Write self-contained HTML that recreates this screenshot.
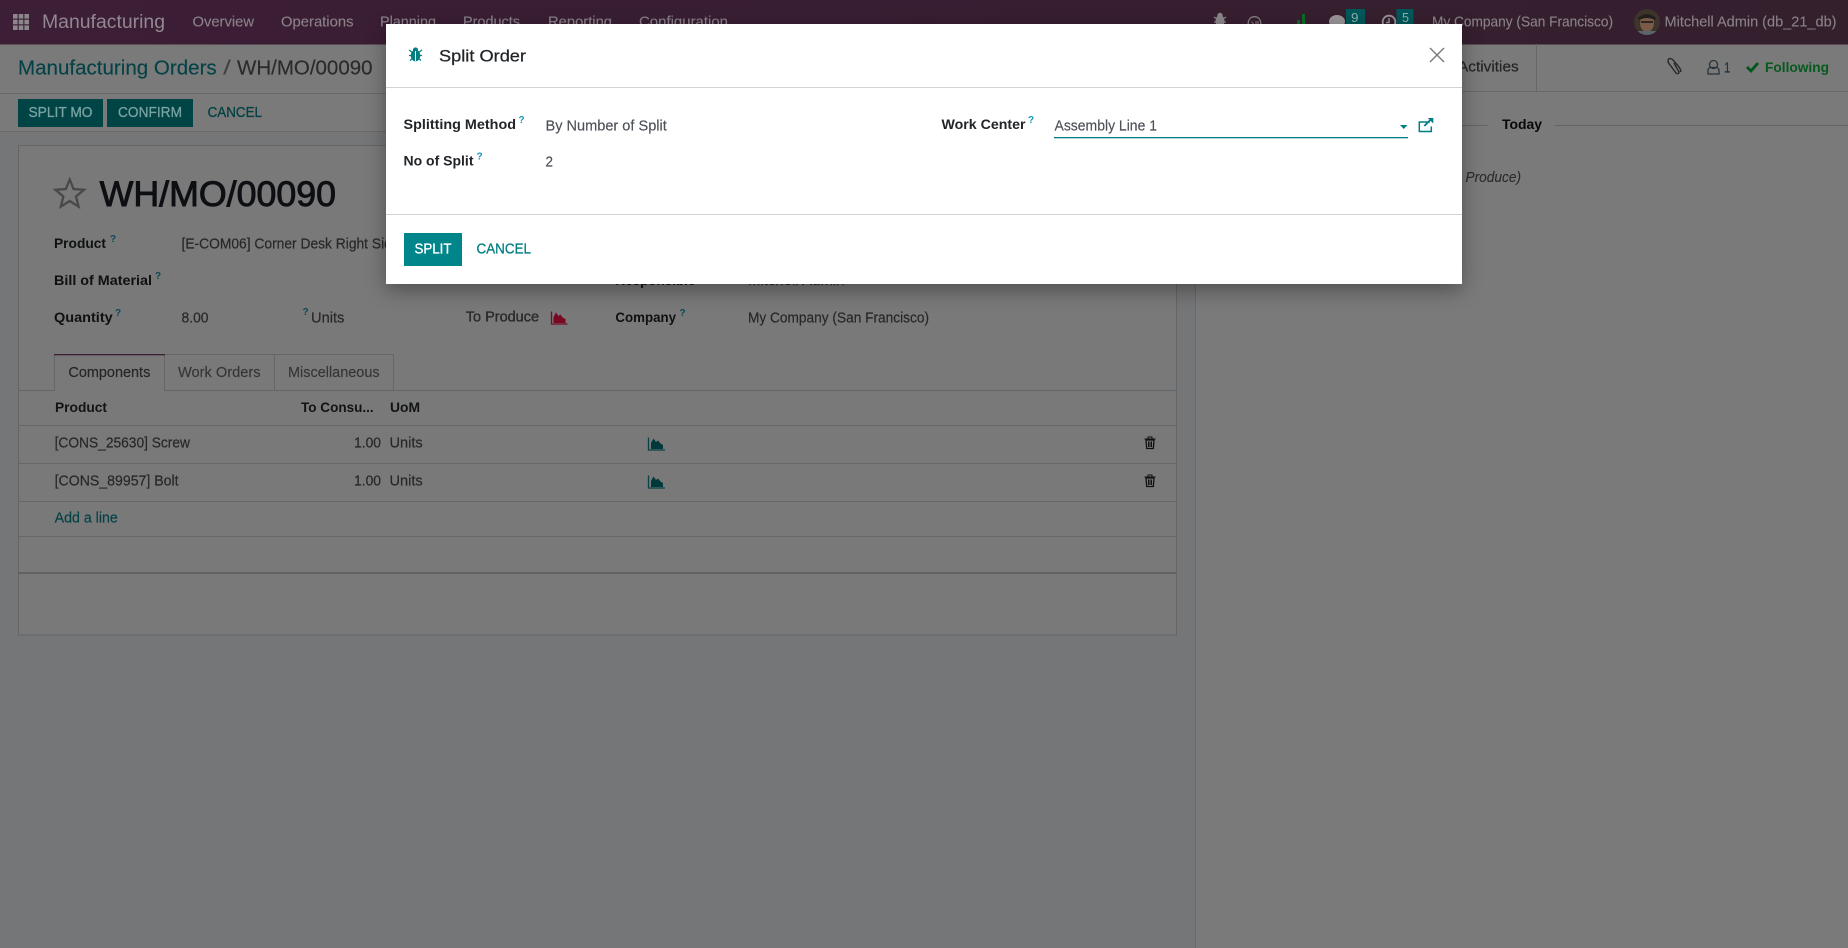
<!DOCTYPE html>
<html lang="en">
<head>
<meta charset="utf-8">
<title>Split Order</title>
<style>
html,body{margin:0;padding:0;width:1848px;height:948px;overflow:hidden;background:#7a7a7a}
svg{display:block;position:absolute;left:0;top:0}
text{font-family:"Liberation Sans",sans-serif;font-size:14.5px;white-space:pre}
.nav{fill:#8a8288;font-size:14.5px;stroke:#8a8288;stroke-width:.12}
.lb{font-weight:700;fill:#0e1012;font-size:14px}
.val{fill:#272727;stroke:#272727;stroke-width:.18}
.th{font-weight:700;fill:#111416;font-size:14px}
.q{font-size:10px;font-weight:700;fill:#0a4854}
.mq{font-size:10px;font-weight:700;fill:#1298b8}
.mlb{font-weight:700;fill:#212529;font-size:14px}
.mval{fill:#4c5058;stroke:#4c5058;stroke-width:.15}
.btn{font-size:14.5px;fill:#7aa2a2;stroke:#7aa2a2;stroke-width:.3}
</style>
</head>
<body>
<svg width="1848" height="948" viewBox="0 0 1848 948" xmlns="http://www.w3.org/2000/svg">
<defs>
<linearGradient id="top" x1="0" x2="1" y1="0" y2="0"><stop offset="0" stop-color="#3c1e36"/><stop offset="1" stop-color="#341f2d"/></linearGradient>
<clipPath id="av"><circle cx="1647" cy="22" r="13"/></clipPath>
</defs>

<!-- backdrop page -->
<rect width="1848" height="948" fill="#7a7a7a"/>
<rect x="0" y="131" width="1195" height="817" fill="#757677"/>

<!-- top navigation -->
<rect width="1848" height="44.500" fill="url(#top)"/>
<g fill="#8b878b">
<rect x="13" y="14" width="4.600" height="4.600"/><rect x="18.700" y="14" width="4.600" height="4.600"/><rect x="24.400" y="14" width="4.600" height="4.600"/>
<rect x="13" y="19.700" width="4.600" height="4.600"/><rect x="18.700" y="19.700" width="4.600" height="4.600"/><rect x="24.400" y="19.700" width="4.600" height="4.600"/>
<rect x="13" y="25.400" width="4.600" height="4.600"/><rect x="18.700" y="25.400" width="4.600" height="4.600"/><rect x="24.400" y="25.400" width="4.600" height="4.600"/>
</g>
<text x="42" y="28" textLength="123" lengthAdjust="spacingAndGlyphs" style="font-size:19px;fill:#928891">Manufacturing</text>
<text class="nav" x="192.500" y="26.500" textLength="61.500" lengthAdjust="spacingAndGlyphs">Overview</text>
<text class="nav" x="281" y="26.500" textLength="72.500" lengthAdjust="spacingAndGlyphs">Operations</text>
<text class="nav" x="380" y="26.500" textLength="56" lengthAdjust="spacingAndGlyphs">Planning</text>
<text class="nav" x="463" y="26.500" textLength="57" lengthAdjust="spacingAndGlyphs">Products</text>
<text class="nav" x="548" y="26.500" textLength="64" lengthAdjust="spacingAndGlyphs">Reporting</text>
<text class="nav" x="639" y="26.500" textLength="89" lengthAdjust="spacingAndGlyphs">Configuration</text>

<!-- systray -->
<g fill="#8b868a"><ellipse cx="1220" cy="21" rx="4.500" ry="6"/><circle cx="1220" cy="15.500" r="2.700"/><path d="M1214 17l3 2M1226 17l-3 2M1214 22h3M1226 22h-3" stroke="#8b868a" stroke-width="1.200"/></g>
<circle cx="1254.500" cy="23" r="6.300" fill="none" stroke="#868084" stroke-width="1.300"/>
<path d="M1251.500 21.500l2 2.500M1256 21v3M1258 21v3" stroke="#868084" stroke-width="1" fill="none"/>
<rect x="1297" y="20" width="3" height="6" fill="#0a6c28"/><rect x="1302" y="14" width="3" height="12" fill="#0a6c28"/>
<ellipse cx="1337" cy="21.500" rx="8" ry="6.500" fill="#9a9498"/>
<rect x="1346" y="9" width="19" height="17" fill="#00585a"/>
<text x="1351" y="22" textLength="7.500" lengthAdjust="spacingAndGlyphs" style="font-size:13px;fill:#8fb0ae">9</text>
<circle cx="1389" cy="22" r="6.300" fill="none" stroke="#9a9498" stroke-width="1.800"/><path d="M1389 18v4.500h-3" fill="none" stroke="#9a9498" stroke-width="1.400"/>
<rect x="1396.500" y="9" width="17" height="17" fill="#00585a"/>
<text x="1402" y="22" textLength="7" lengthAdjust="spacingAndGlyphs" style="font-size:13px;fill:#8fb0ae">5</text>
<text class="nav" x="1432" y="26.500" textLength="181" lengthAdjust="spacingAndGlyphs">My Company (San Francisco)</text>
<g clip-path="url(#av)">
<rect x="1634" y="9" width="26" height="26" fill="#3d342c"/>
<ellipse cx="1647" cy="23" rx="7" ry="9" fill="#7a5a49"/>
<path d="M1638 18q9-8 18 0l-1 2q-8-4-16 0z" fill="#231e1b"/>
<rect x="1641" y="21" width="12" height="2" fill="#2f2723"/>
<rect x="1636" y="31" width="22" height="5" fill="#5a656e"/>
</g>
<text class="nav" x="1664.500" y="26.500" textLength="172" lengthAdjust="spacingAndGlyphs">Mitchell Admin (db_21_db)</text>

<!-- control panel -->
<text x="18" y="74.500" textLength="198.700" lengthAdjust="spacingAndGlyphs" style="font-size:20px;fill:#044246;stroke:#044246;stroke-width:.15">Manufacturing Orders</text>
<text x="223" y="74.500" textLength="8" lengthAdjust="spacingAndGlyphs" style="font-size:20px;fill:#404040">/</text>
<text x="237" y="74.500" textLength="135.500" lengthAdjust="spacingAndGlyphs" style="font-size:20px;fill:#2a2a2a;stroke:#2a2a2a;stroke-width:.15">WH/MO/00090</text>
<rect x="0" y="93" width="1195" height="1" fill="#686868"/>
<rect x="18" y="99" width="85" height="28" fill="#004446"/>
<text class="btn" x="28.500" y="117" textLength="64" lengthAdjust="spacingAndGlyphs">SPLIT MO</text>
<rect x="107" y="99" width="86" height="28" fill="#004446"/>
<text class="btn" x="118" y="117" textLength="64" lengthAdjust="spacingAndGlyphs">CONFIRM</text>
<text x="207.600" y="117" textLength="54.400" lengthAdjust="spacingAndGlyphs" style="fill:#024144;stroke:#024144;stroke-width:.3">CANCEL</text>
<rect x="0" y="131" width="1195" height="1" fill="#686868"/>

<!-- chatter -->
<rect x="1195" y="91" width="653" height="857" fill="#7a7a7a"/>
<rect x="1195" y="91" width="1" height="857" fill="#696a6b"/>
<rect x="1195" y="91" width="653" height="1" fill="#686868"/>
<rect x="1536" y="44" width="1" height="47" fill="#686868"/>
<text x="1458" y="71.500" textLength="60.700" lengthAdjust="spacingAndGlyphs" style="fill:#222;stroke:#222;stroke-width:.15">Activities</text>
<path d="M1680 71c2 2 0-3-1-4l-6-7c-2-2-5-2-5 1 0 2 1 3 2 4l6 8c1 1 3 1 3-1l-5-9" fill="none" stroke="#2a2a2a" stroke-width="1.400"/>
<circle cx="1713.500" cy="64.500" r="4" fill="none" stroke="#28333b" stroke-width="1.300"/>
<path d="M1708 74v-3.500c0-2 1.500-3 3-3h5c1.500 0 3 1 3 3V74z" fill="none" stroke="#28333b" stroke-width="1.300"/>
<text x="1724" y="72.500" textLength="6.500" lengthAdjust="spacingAndGlyphs" style="fill:#28333b;stroke:#28333b;stroke-width:.2">1</text>
<path d="M1747 67l4 4 7-8" fill="none" stroke="#005518" stroke-width="2.800"/>
<text x="1765" y="72" textLength="64" lengthAdjust="spacingAndGlyphs" style="font-weight:700;font-size:14px;fill:#065a1e">Following</text>
<rect x="1440" y="125" width="48" height="1" fill="#646464"/>
<rect x="1555" y="125" width="293" height="1" fill="#646464"/>
<text x="1502" y="129" textLength="40" lengthAdjust="spacingAndGlyphs" style="font-weight:700;font-size:14px;fill:#080808">Today</text>
<text x="1465.500" y="182" textLength="55.500" lengthAdjust="spacingAndGlyphs" style="font-style:italic;fill:#2c2c2c;stroke:#2c2c2c;stroke-width:.12">Produce)</text>

<!-- sheet -->
<rect x="18.500" y="145.500" width="1158" height="489.500" fill="#797979" stroke="#646566"/>
<polygon points="69.700,179.500 73.600,189 84,189.800 76,196.500 78.600,206.600 69.700,201 60.800,206.600 63.400,196.500 55.400,189.800 65.800,189" fill="none" stroke="#484848" stroke-width="2.300"/>
<text x="99.600" y="206" textLength="236.400" lengthAdjust="spacingAndGlyphs" style="font-size:35px;fill:#0d0f12;stroke:#0d0f12;stroke-width:.9">WH/MO/00090</text>

<text class="lb" x="54" y="248" textLength="52" lengthAdjust="spacingAndGlyphs">Product</text>
<text class="q" x="110" y="242">?</text>
<text class="val" x="181.500" y="248.500" textLength="218" lengthAdjust="spacingAndGlyphs">[E-COM06] Corner Desk Right Side</text>
<text class="lb" x="54" y="285" textLength="98" lengthAdjust="spacingAndGlyphs">Bill of Material</text>
<text class="q" x="155" y="279">?</text>
<text class="lb" x="54" y="322" textLength="58.700" lengthAdjust="spacingAndGlyphs">Quantity</text>
<text class="q" x="115" y="316">?</text>
<text class="val" x="181.500" y="322.500" textLength="27" lengthAdjust="spacingAndGlyphs">8.00</text>
<text class="q" x="302.500" y="315">?</text>
<text class="val" x="311" y="322.500" textLength="33.400" lengthAdjust="spacingAndGlyphs">Units</text>
<text x="465.800" y="321.500" textLength="73.200" lengthAdjust="spacingAndGlyphs" style="fill:#2a2a2a;stroke:#2a2a2a;stroke-width:.35">To Produce</text>
<path d="M551.500 311.500v12.500h16" fill="none" stroke="#740d28" stroke-width="1.300"/>
<path d="M553.500 323v-6l2.500-4.500 2.500 3.500 2-1.500 2 3 3 1.500v4z" fill="#780823"/>
<text class="lb" x="615.400" y="285" textLength="80" lengthAdjust="spacingAndGlyphs">Responsible</text>
<text class="val" x="748" y="285" textLength="96.500" lengthAdjust="spacingAndGlyphs">Mitchell Admin</text>
<text class="lb" x="615.400" y="322" textLength="60.600" lengthAdjust="spacingAndGlyphs">Company</text>
<text class="q" x="679.500" y="316">?</text>
<text class="val" x="748" y="322.500" textLength="181" lengthAdjust="spacingAndGlyphs">My Company (San Francisco)</text>

<!-- tabs -->
<rect x="18" y="390" width="1158" height="1" fill="#646566"/>
<path d="M164.500 390.500V354.500H393.500V390.500M274.500 354.500V390.500" fill="none" stroke="#666"/>
<rect x="54" y="354" width="111" height="37" fill="#797979"/>
<path d="M54.500 391V354.500M164.500 354.500V391" fill="none" stroke="#666"/>
<rect x="54" y="354" width="111" height="1.300" fill="#3c1e36"/>
<text x="68.400" y="377" textLength="81.900" lengthAdjust="spacingAndGlyphs" style="fill:#252527;stroke:#252527;stroke-width:.15">Components</text>
<text x="178" y="377" textLength="82.600" lengthAdjust="spacingAndGlyphs" style="fill:#363639;stroke:#363639;stroke-width:.15">Work Orders</text>
<text x="288" y="377" textLength="91.600" lengthAdjust="spacingAndGlyphs" style="fill:#363639;stroke:#363639;stroke-width:.15">Miscellaneous</text>

<!-- table -->
<text class="th" x="55" y="412" textLength="52" lengthAdjust="spacingAndGlyphs">Product</text>
<text class="th" x="301" y="412" textLength="72.700" lengthAdjust="spacingAndGlyphs">To Consu...</text>
<text class="th" x="390" y="412" textLength="30" lengthAdjust="spacingAndGlyphs">UoM</text>
<rect x="18" y="425" width="1158" height="1" fill="#676767"/>
<text class="val" x="54.600" y="447.500" textLength="135.400" lengthAdjust="spacingAndGlyphs">[CONS_25630] Screw</text>
<text class="val" x="354" y="447.500" textLength="27" lengthAdjust="spacingAndGlyphs">1.00</text>
<text class="val" x="389.500" y="447.500" textLength="33.200" lengthAdjust="spacingAndGlyphs">Units</text>
<rect x="18" y="463" width="1158" height="1" fill="#676767"/>
<text class="val" x="54.600" y="485.500" textLength="124" lengthAdjust="spacingAndGlyphs">[CONS_89957] Bolt</text>
<text class="val" x="354" y="485.500" textLength="27" lengthAdjust="spacingAndGlyphs">1.00</text>
<text class="val" x="389.500" y="485.500" textLength="33.200" lengthAdjust="spacingAndGlyphs">Units</text>
<rect x="18" y="501" width="1158" height="1" fill="#676767"/>
<text x="54.600" y="522.500" textLength="63.200" lengthAdjust="spacingAndGlyphs" style="fill:#024144;stroke:#024144;stroke-width:.15">Add a line</text>
<rect x="18" y="536" width="1158" height="1" fill="#676767"/>
<rect x="18" y="572" width="1158" height="2" fill="#626262"/>

<g>
<path d="M648.500 437.500v12.500h16.500" fill="none" stroke="#084346" stroke-width="1.300"/>
<path d="M651 449v-6l2.500-4.500 2.500 3.500 2-1.500 2.500 3 2.500 1.500v4z" fill="#01383b"/>
<path d="M1146 440h8l-.7 8.500h-6.600z" fill="none" stroke="#101010" stroke-width="1.300"/>
<path d="M1144.500 439h11M1148 439v-2h4v2M1148.500 441.500v5.500M1150 441.500v5.500M1151.500 441.500v5.500" fill="none" stroke="#101010" stroke-width="1"/>
</g>
<g transform="translate(0 38)">
<path d="M648.500 437.500v12.500h16.500" fill="none" stroke="#084346" stroke-width="1.300"/>
<path d="M651 449v-6l2.500-4.500 2.500 3.500 2-1.500 2.500 3 2.500 1.500v4z" fill="#01383b"/>
<path d="M1146 440h8l-.7 8.500h-6.600z" fill="none" stroke="#101010" stroke-width="1.300"/>
<path d="M1144.500 439h11M1148 439v-2h4v2M1148.500 441.500v5.500M1150 441.500v5.500M1151.500 441.500v5.500" fill="none" stroke="#101010" stroke-width="1"/>
</g>

<!-- modal -->
<rect x="386" y="24" width="1076" height="260" fill="#fff" style="filter:drop-shadow(0 6px 10px rgba(0,0,0,.35))"/>
<g fill="#017e84">
<ellipse cx="415.500" cy="55.500" rx="4.800" ry="5.800"/>
<circle cx="415.500" cy="50" r="2.600"/>
<path d="M409 50l3.500 2.500M422 50l-3.500 2.500M409 55.500h3M422 55.500h-3M410 60.500l3-2.500M421 60.500l-3-2.500" stroke="#017e84" stroke-width="1.200"/>
<rect x="415" y="51" width="1" height="10" fill="#fff"/>
</g>
<text x="439" y="61.500" textLength="87" lengthAdjust="spacingAndGlyphs" style="font-size:17px;fill:#212529;stroke:#212529;stroke-width:.25">Split Order</text>
<path d="M1430 48l14 14M1444 48l-14 14" stroke="#7d7d7d" stroke-width="1.500" fill="none"/>
<rect x="386" y="87" width="1076" height="1" fill="#d3d3d7"/>

<text class="mlb" x="403.500" y="129" textLength="112.500" lengthAdjust="spacingAndGlyphs">Splitting Method</text>
<text class="mq" x="518.500" y="123">?</text>
<text class="mval" x="545.500" y="130.500" textLength="121.300" lengthAdjust="spacingAndGlyphs">By Number of Split</text>
<text class="mlb" x="403.500" y="165.500" textLength="70" lengthAdjust="spacingAndGlyphs">No of Split</text>
<text class="mq" x="476.500" y="159.500">?</text>
<text class="mval" x="545.500" y="166.500" textLength="7.500" lengthAdjust="spacingAndGlyphs">2</text>

<text class="mlb" x="941.500" y="129" textLength="84" lengthAdjust="spacingAndGlyphs">Work Center</text>
<text class="mq" x="1028" y="123">?</text>
<text class="mval" x="1054.500" y="130.500" textLength="102.500" lengthAdjust="spacingAndGlyphs">Assembly Line 1</text>
<rect x="1054" y="137" width="354" height="1.300" fill="#017e84"/>
<path d="M1400 125h7.500l-3.750 4z" fill="#017e84"/>
<g transform="translate(-1.200 -1.500)">
<path d="M1431 123.500h-10.500v9.500h12v-5" fill="none" stroke="#017e84" stroke-width="1.500"/>
<path d="M1425.500 127.500l7-7" stroke="#017e84" stroke-width="1.800" fill="none"/>
<path d="M1429 119.500h5.500v5.500z" fill="#017e84"/>
</g>

<rect x="386" y="214" width="1076" height="1" fill="#d3d3d7"/>
<rect x="404" y="233" width="58" height="33" fill="#00868a"/>
<text x="414.500" y="253.500" textLength="37" lengthAdjust="spacingAndGlyphs" style="font-size:14.500px;fill:#fff;stroke:#fff;stroke-width:.3">SPLIT</text>
<text x="476.500" y="253.500" textLength="54.500" lengthAdjust="spacingAndGlyphs" style="font-size:14.500px;fill:#017e84;stroke:#017e84;stroke-width:.3">CANCEL</text>
</svg>
</body>
</html>
